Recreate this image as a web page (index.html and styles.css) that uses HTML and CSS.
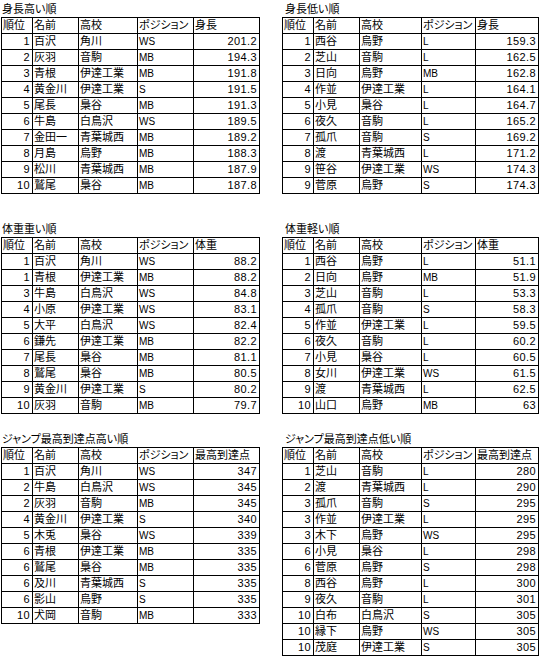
FILE: index.html
```html
<!DOCTYPE html>
<html lang="ja">
<head>
<meta charset="utf-8">
<title>ランキング</title>
<link rel="stylesheet" href="styles.css">
</head>
<body>
<div class="page">

<div class="section s1">
  <div class="block left">
    <div class="title">身長高い順</div>
    <table class="tbl">
      <colgroup><col class="c1"><col class="c2"><col class="c3"><col class="c4"><col class="c5"></colgroup>
      <tr><td>順位</td><td>名前</td><td>高校</td><td>ポジション</td><td>身長</td></tr>
      <tr><td class="n">1</td><td>百沢</td><td>角川</td><td class="p">WS</td><td class="n">201.2</td></tr>
      <tr><td class="n">2</td><td>灰羽</td><td>音駒</td><td class="p">MB</td><td class="n">194.3</td></tr>
      <tr><td class="n">3</td><td>青根</td><td>伊達工業</td><td class="p">MB</td><td class="n">191.8</td></tr>
      <tr><td class="n">4</td><td>黄金川</td><td>伊達工業</td><td class="p">S</td><td class="n">191.5</td></tr>
      <tr><td class="n">5</td><td>尾長</td><td>梟谷</td><td class="p">MB</td><td class="n">191.3</td></tr>
      <tr><td class="n">6</td><td>牛島</td><td>白鳥沢</td><td class="p">WS</td><td class="n">189.5</td></tr>
      <tr><td class="n">7</td><td>金田一</td><td>青葉城西</td><td class="p">MB</td><td class="n">189.2</td></tr>
      <tr><td class="n">8</td><td>月島</td><td>烏野</td><td class="p">MB</td><td class="n">188.3</td></tr>
      <tr><td class="n">9</td><td>松川</td><td>青葉城西</td><td class="p">MB</td><td class="n">187.9</td></tr>
      <tr><td class="n">10</td><td>鷲尾</td><td>梟谷</td><td class="p">MB</td><td class="n">187.8</td></tr>
    </table>
  </div>
  <div class="block right">
    <div class="title">身長低い順</div>
    <table class="tbl">
      <colgroup><col class="c1"><col class="c2"><col class="c3"><col class="c4"><col class="c5"></colgroup>
      <tr><td>順位</td><td>名前</td><td>高校</td><td>ポジション</td><td>身長</td></tr>
      <tr><td class="n">1</td><td>西谷</td><td>烏野</td><td class="p">L</td><td class="n">159.3</td></tr>
      <tr><td class="n">2</td><td>芝山</td><td>音駒</td><td class="p">L</td><td class="n">162.5</td></tr>
      <tr><td class="n">3</td><td>日向</td><td>烏野</td><td class="p">MB</td><td class="n">162.8</td></tr>
      <tr><td class="n">4</td><td>作並</td><td>伊達工業</td><td class="p">L</td><td class="n">164.1</td></tr>
      <tr><td class="n">5</td><td>小見</td><td>梟谷</td><td class="p">L</td><td class="n">164.7</td></tr>
      <tr><td class="n">6</td><td>夜久</td><td>音駒</td><td class="p">L</td><td class="n">165.2</td></tr>
      <tr><td class="n">7</td><td>孤爪</td><td>音駒</td><td class="p">S</td><td class="n">169.2</td></tr>
      <tr><td class="n">8</td><td>渡</td><td>青葉城西</td><td class="p">L</td><td class="n">171.2</td></tr>
      <tr><td class="n">9</td><td>笹谷</td><td>伊達工業</td><td class="p">WS</td><td class="n">174.3</td></tr>
      <tr><td class="n">9</td><td>菅原</td><td>烏野</td><td class="p">S</td><td class="n">174.3</td></tr>
    </table>
  </div>
</div>

<div class="section s2">
  <div class="block left">
    <div class="title">体重重い順</div>
    <table class="tbl">
      <colgroup><col class="c1"><col class="c2"><col class="c3"><col class="c4"><col class="c5"></colgroup>
      <tr><td>順位</td><td>名前</td><td>高校</td><td>ポジション</td><td>体重</td></tr>
      <tr><td class="n">1</td><td>百沢</td><td>角川</td><td class="p">WS</td><td class="n">88.2</td></tr>
      <tr><td class="n">1</td><td>青根</td><td>伊達工業</td><td class="p">MB</td><td class="n">88.2</td></tr>
      <tr><td class="n">3</td><td>牛島</td><td>白鳥沢</td><td class="p">WS</td><td class="n">84.8</td></tr>
      <tr><td class="n">4</td><td>小原</td><td>伊達工業</td><td class="p">WS</td><td class="n">83.1</td></tr>
      <tr><td class="n">5</td><td>大平</td><td>白鳥沢</td><td class="p">WS</td><td class="n">82.4</td></tr>
      <tr><td class="n">6</td><td>鎌先</td><td>伊達工業</td><td class="p">MB</td><td class="n">82.2</td></tr>
      <tr><td class="n">7</td><td>尾長</td><td>梟谷</td><td class="p">MB</td><td class="n">81.1</td></tr>
      <tr><td class="n">8</td><td>鷲尾</td><td>梟谷</td><td class="p">MB</td><td class="n">80.5</td></tr>
      <tr><td class="n">9</td><td>黄金川</td><td>伊達工業</td><td class="p">S</td><td class="n">80.2</td></tr>
      <tr><td class="n">10</td><td>灰羽</td><td>音駒</td><td class="p">MB</td><td class="n">79.7</td></tr>
    </table>
  </div>
  <div class="block right">
    <div class="title">体重軽い順</div>
    <table class="tbl">
      <colgroup><col class="c1"><col class="c2"><col class="c3"><col class="c4"><col class="c5"></colgroup>
      <tr><td>順位</td><td>名前</td><td>高校</td><td>ポジション</td><td>体重</td></tr>
      <tr><td class="n">1</td><td>西谷</td><td>烏野</td><td class="p">L</td><td class="n">51.1</td></tr>
      <tr><td class="n">2</td><td>日向</td><td>烏野</td><td class="p">MB</td><td class="n">51.9</td></tr>
      <tr><td class="n">3</td><td>芝山</td><td>音駒</td><td class="p">L</td><td class="n">53.3</td></tr>
      <tr><td class="n">4</td><td>孤爪</td><td>音駒</td><td class="p">S</td><td class="n">58.3</td></tr>
      <tr><td class="n">5</td><td>作並</td><td>伊達工業</td><td class="p">L</td><td class="n">59.5</td></tr>
      <tr><td class="n">6</td><td>夜久</td><td>音駒</td><td class="p">L</td><td class="n">60.2</td></tr>
      <tr><td class="n">7</td><td>小見</td><td>梟谷</td><td class="p">L</td><td class="n">60.5</td></tr>
      <tr><td class="n">8</td><td>女川</td><td>伊達工業</td><td class="p">WS</td><td class="n">61.5</td></tr>
      <tr><td class="n">9</td><td>渡</td><td>青葉城西</td><td class="p">L</td><td class="n">62.5</td></tr>
      <tr><td class="n">10</td><td>山口</td><td>烏野</td><td class="p">MB</td><td class="n">63</td></tr>
    </table>
  </div>
</div>

<div class="section s3">
  <div class="block left">
    <div class="title">ジャンプ最高到達点高い順</div>
    <table class="tbl">
      <colgroup><col class="c1"><col class="c2"><col class="c3"><col class="c4"><col class="c5"></colgroup>
      <tr><td>順位</td><td>名前</td><td>高校</td><td>ポジション</td><td>最高到達点</td></tr>
      <tr><td class="n">1</td><td>百沢</td><td>角川</td><td class="p">WS</td><td class="n">347</td></tr>
      <tr><td class="n">2</td><td>牛島</td><td>白鳥沢</td><td class="p">WS</td><td class="n">345</td></tr>
      <tr><td class="n">2</td><td>灰羽</td><td>音駒</td><td class="p">MB</td><td class="n">345</td></tr>
      <tr><td class="n">4</td><td>黄金川</td><td>伊達工業</td><td class="p">S</td><td class="n">340</td></tr>
      <tr><td class="n">5</td><td>木兎</td><td>梟谷</td><td class="p">WS</td><td class="n">339</td></tr>
      <tr><td class="n">6</td><td>青根</td><td>伊達工業</td><td class="p">MB</td><td class="n">335</td></tr>
      <tr><td class="n">6</td><td>鷲尾</td><td>梟谷</td><td class="p">MB</td><td class="n">335</td></tr>
      <tr><td class="n">6</td><td>及川</td><td>青葉城西</td><td class="p">S</td><td class="n">335</td></tr>
      <tr><td class="n">6</td><td>影山</td><td>烏野</td><td class="p">S</td><td class="n">335</td></tr>
      <tr><td class="n">10</td><td>犬岡</td><td>音駒</td><td class="p">MB</td><td class="n">333</td></tr>
    </table>
  </div>
  <div class="block right">
    <div class="title">ジャンプ最高到達点低い順</div>
    <table class="tbl">
      <colgroup><col class="c1"><col class="c2"><col class="c3"><col class="c4"><col class="c5"></colgroup>
      <tr><td>順位</td><td>名前</td><td>高校</td><td>ポジション</td><td>最高到達点</td></tr>
      <tr><td class="n">1</td><td>芝山</td><td>音駒</td><td class="p">L</td><td class="n">280</td></tr>
      <tr><td class="n">2</td><td>渡</td><td>青葉城西</td><td class="p">L</td><td class="n">290</td></tr>
      <tr><td class="n">3</td><td>孤爪</td><td>音駒</td><td class="p">S</td><td class="n">295</td></tr>
      <tr><td class="n">3</td><td>作並</td><td>伊達工業</td><td class="p">L</td><td class="n">295</td></tr>
      <tr><td class="n">3</td><td>木下</td><td>烏野</td><td class="p">WS</td><td class="n">295</td></tr>
      <tr><td class="n">6</td><td>小見</td><td>梟谷</td><td class="p">L</td><td class="n">298</td></tr>
      <tr><td class="n">6</td><td>菅原</td><td>烏野</td><td class="p">S</td><td class="n">298</td></tr>
      <tr><td class="n">8</td><td>西谷</td><td>烏野</td><td class="p">L</td><td class="n">300</td></tr>
      <tr><td class="n">9</td><td>夜久</td><td>音駒</td><td class="p">L</td><td class="n">301</td></tr>
      <tr><td class="n">10</td><td>白布</td><td>白鳥沢</td><td class="p">S</td><td class="n">305</td></tr>
      <tr><td class="n">10</td><td>縁下</td><td>烏野</td><td class="p">WS</td><td class="n">305</td></tr>
      <tr><td class="n">10</td><td>茂庭</td><td>伊達工業</td><td class="p">S</td><td class="n">305</td></tr>
    </table>
  </div>
</div>

</div>
</body>
</html>
```

FILE: styles.css
```css
html, body {
  margin: 0;
  padding: 0;
  background: #ffffff;
}

body {
  font-family: "Liberation Sans", "Noto Sans CJK JP", sans-serif;
  font-size: 11px;
  color: #000000;
  font-feature-settings: "palt";
}

.page {
  width: 539px;
  padding-left: 1px;
}

.section {
  display: flex;
  align-items: flex-start;
  gap: 23px;
}

.s1 { padding-top: 2px; }
.s2 { margin-top: 28px; }
.s3 { margin-top: 18px; }

.block.left { width: 258px; }
.block.right { width: 256px; }

.title {
  height: 15px;
  line-height: 15px;
  padding-left: 1px;
  white-space: nowrap;
}

.right .title { padding-left: 3px; }

.tbl {
  border-collapse: collapse;
  table-layout: fixed;
  width: 100%;
}

.tbl td {
  border: 1px solid #000000;
  height: 15px;
  line-height: 15px;
  padding: 0 1px;
  white-space: nowrap;
  overflow: hidden;
  vertical-align: middle;
}

.tbl td.n {
  text-align: right;
  padding-right: 2px;
  letter-spacing: 0.4px;
}

.tbl td.p {
  font-size: 10px;
}

.left .c1 { width: 31px; }
.left .c2 { width: 46px; }
.left .c3 { width: 59px; }
.left .c4 { width: 56px; }
.left .c5 { width: 66px; }

.right .c1 { width: 31px; }
.right .c2 { width: 46px; }
.right .c3 { width: 62px; }
.right .c4 { width: 54px; }
.right .c5 { width: 63px; }
```
